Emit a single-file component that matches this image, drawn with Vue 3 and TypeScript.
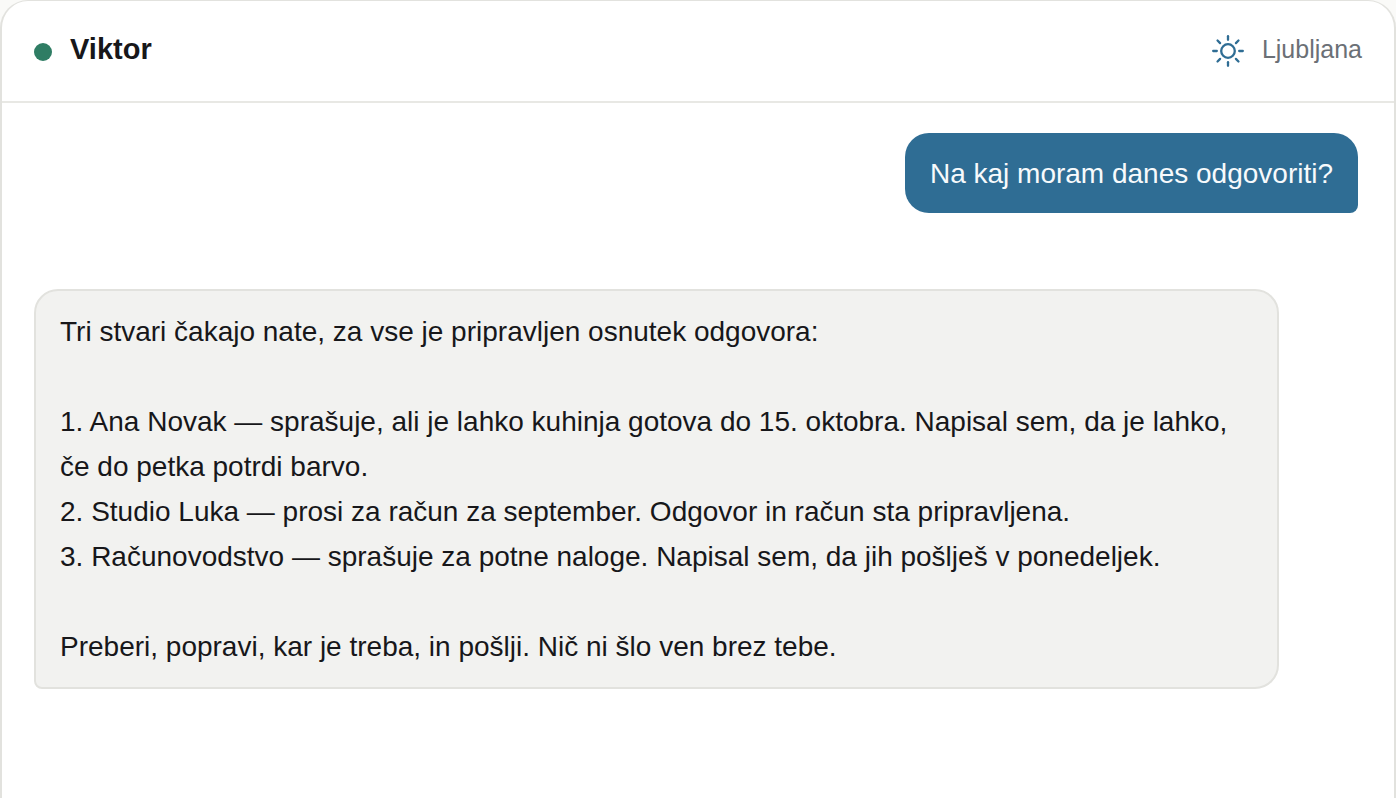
<script setup lang="ts">
interface Message {
  id: number
  from: 'user' | 'assistant'
  text: string
}

const assistantName = 'Viktor'
const city = 'Ljubljana'

const messages: Message[] = [
  { id: 1, from: 'user', text: 'Na kaj moram danes odgovoriti?' },
  {
    id: 2,
    from: 'assistant',
    text: [
      'Tri stvari čakajo nate, za vse je pripravljen osnutek odgovora:',
      '',
      '1. Ana Novak — sprašuje, ali je lahko kuhinja gotova do 15. oktobra. Napisal sem, da je lahko, če do petka potrdi barvo.',
      '2. Studio Luka — prosi za račun za september. Odgovor in račun sta pripravljena.',
      '3. Računovodstvo — sprašuje za potne naloge. Napisal sem, da jih pošlješ v ponedeljek.',
      '',
      'Preberi, popravi, kar je treba, in pošlji. Nič ni šlo ven brez tebe.',
    ].join('\n'),
  },
]

const rays = [0, 45, 90, 135, 180, 225, 270, 315]
</script>

<template>
  <main class="chat">
    <header class="chat-header">
      <div class="identity">
        <span class="status"></span>
        <h1 class="name">{{ assistantName }}</h1>
      </div>
      <div class="weather">
        <svg class="sun" viewBox="0 0 36 36" aria-hidden="true">
          <circle cx="18" cy="18" r="6.8" />
          <line v-for="a in rays" :key="a" x1="18" y1="3.2" x2="18" y2="6.8" :transform="`rotate(${a} 18 18)`" />
        </svg>
        <span>{{ city }}</span>
      </div>
    </header>
    <section class="thread">
      <p v-for="m in messages" :key="m.id" class="bubble" :class="m.from">{{ m.text }}</p>
    </section>
  </main>
</template>

<style>
body {
  background: #fafaf8;
}
</style>

<style scoped>
.chat {
  box-sizing: border-box;
  min-height: 100vh;
  border: 2px solid #e2e2de;
  border-top-width: 1px;
  border-bottom: 0;
  border-radius: 28px 28px 0 0;
  background: #fff;
  color: #17171a;
  font-family: "Liberation Sans", Arial, sans-serif;
}

.chat-header {
  display: flex;
  align-items: center;
  justify-content: space-between;
  padding: 26px 32px 30px;
  border-bottom: 2px solid #e8e8e4;
}

.identity {
  display: flex;
  align-items: center;
  gap: 18px;
}

.status {
  width: 18px;
  height: 18px;
  margin-top: 6px;
  border-radius: 50%;
  background: #2f7d64;
}

.name {
  margin: 0;
  font-size: 29px;
  font-weight: 700;
  line-height: 44px;
}

.weather {
  display: flex;
  align-items: center;
  gap: 16px;
  color: #6b7076;
  font-size: 25px;
  line-height: 44px;
}

.sun {
  width: 36px;
  height: 36px;
  margin-top: 4px;
  fill: none;
  stroke: #2f6d94;
  stroke-width: 2.3;
  stroke-linecap: round;
}

.thread {
  display: flex;
  flex-direction: column;
  gap: 76px;
  padding: 30px 36px 30px 32px;
}

.bubble {
  box-sizing: border-box;
  max-width: 94%;
  margin: 0;
  border-radius: 24px;
  font-size: 28px;
  line-height: 45px;
  white-space: pre-wrap;
}

.user {
  align-self: flex-end;
  padding: 18px 25px 17px;
  border-bottom-right-radius: 8px;
  background: #2f6d94;
  color: #f7fafc;
}

.assistant {
  align-self: flex-start;
  padding: 18px 24px;
  border: 2px solid #e2e2de;
  border-bottom-left-radius: 8px;
  background: #f2f2f0;
}
</style>
